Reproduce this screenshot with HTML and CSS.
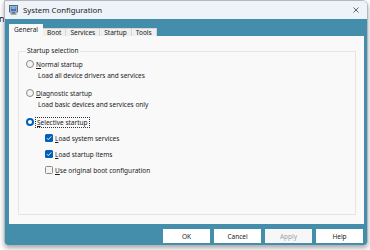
FILE: index.html
```html
<!DOCTYPE html>
<html>
<head>
<meta charset="utf-8">
<title>System Configuration</title>
<link rel="stylesheet" href="styles.css">
</head>
<body>
<div class="desktop">
  <span class="behind">n</span>
  <div class="window">
    <div class="titlebar">
      <svg class="appicon" width="10" height="10" viewBox="0 0 10 10">
        <rect x="0.5" y="0.5" width="8" height="6.5" fill="#dfe6ee" stroke="#5b6670" stroke-width="1"/>
        <rect x="1.5" y="1.5" width="6" height="4.5" fill="#3b78c4"/>
        <rect x="2.5" y="2.5" width="4" height="1" fill="#cfe3f7"/>
        <rect x="3" y="7.2" width="3" height="1.2" fill="#5b6670"/>
        <rect x="1.5" y="8.4" width="6" height="1.1" fill="#5b6670"/>
      </svg>
      <span class="title">System Configuration</span>
      <svg class="close" width="6" height="6" viewBox="0 0 6 6">
        <path d="M0.5 0.5 L5.5 5.5 M5.5 0.5 L0.5 5.5" stroke="#555" stroke-width="0.9" fill="none"/>
      </svg>
    </div>
    <div class="frame">
      <div class="tabs">
        <div class="tab active">General</div>
        <div class="tab">Boot</div>
        <div class="tab">Services</div>
        <div class="tab">Startup</div>
        <div class="tab">Tools</div>
      </div>
      <div class="panel">
        <fieldset class="group">
          <legend>Startup selection</legend>
          <div class="opt first"><span class="radio"></span><span><u>N</u>ormal startup</span></div>
          <div class="desc">Load all device drivers and services</div>
          <div class="opt"><span class="radio"></span><span><u>D</u>iagnostic startup</span></div>
          <div class="desc">Load basic devices and services only</div>
          <div class="opt"><span class="radio on"></span><span class="focus"><u>S</u>elective startup</span></div>
          <div class="sub">
            <div class="chk-row"><span class="check on"><svg width="8" height="8" viewBox="0 0 8 8"><path d="M1.8 4.1 L3.3 5.6 L6.3 2.4" stroke="#fff" stroke-width="0.9" fill="none"/></svg></span><span><u>L</u>oad system services</span></div>
            <div class="chk-row"><span class="check on"><svg width="8" height="8" viewBox="0 0 8 8"><path d="M1.8 4.1 L3.3 5.6 L6.3 2.4" stroke="#fff" stroke-width="0.9" fill="none"/></svg></span><span><u>L</u>oad startup items</span></div>
            <div class="chk-row"><span class="check"></span><span><u>U</u>se original boot configuration</span></div>
          </div>
        </fieldset>
      </div>
      <div class="buttons">
        <button class="btn">OK</button>
        <button class="btn">Cancel</button>
        <button class="btn disabled">Apply</button>
        <button class="btn">Help</button>
      </div>
    </div>
  </div>
</div>
</body>
</html>
```
FILE: styles.css
```css
* { box-sizing: border-box; }
html, body { margin: 0; padding: 0; }
body {
  width: 370px;
  height: 250px;
  overflow: hidden;
  background: #ffffff;
  font-family: "Noto Sans", "Open Sans", sans-serif;
  font-size: 6.5px;
  color: #1b1b1b;
}
.desktop { position: relative; width: 370px; height: 250px; }
.behind {
  position: absolute;
  left: -1px;
  top: 14px;
  font-size: 9px;
  line-height: 10px;
  color: #222;
}
.window {
  position: absolute;
  left: 4px;
  top: 0;
  width: 364px;
  height: 246px;
  border: 1px solid #b4b8bd;
  border-radius: 0 6px 4px 4px;
  overflow: hidden;
  box-shadow: 0 2px 5px rgba(0,0,0,0.35);
  display: flex;
  flex-direction: column;
}
.titlebar {
  height: 18px;
  background: #eef2f9;
  display: flex;
  align-items: center;
  padding: 0 0 0 4px;
  flex: none;
}
.appicon { margin-right: 4px; margin-top: -1px; }
.title { font-size: 7.8px; color: #1b1b1b; flex: 1; }
.close { margin-right: 8px; }
.frame {
  flex: 1;
  background: #448dab;
  padding: 5px 3px 0 4px;
  display: flex;
  flex-direction: column;
}
.tabs {
  display: flex;
  align-items: flex-end;
  height: 12px;
  position: relative;
  z-index: 1;
}
.tab {
  height: 8px;
  line-height: 7px;
  padding: 0 4px;
  background: #f0f0f0;
  border: 1px solid #d6d6d6;
  border-bottom: none;
  border-left: none;
  font-size: 6.5px;
}
.tab.active {
  height: 13px;
  margin-bottom: -1px;
  line-height: 11px;
  background: #f9f9f9;
  border: none;
  padding: 0 5px;
}
.panel {
  height: 188px;
  background: #f9f9f9;
  padding: 11px 8px 9px 9px;
  display: flex;
}
.group {
  flex: 1;
  margin: 0;
  border: 1px solid #e5e5e5;
  padding: 5px 6px 0 7px;
  min-width: 0;
}
.group legend {
  padding: 0 1px;
  margin-left: 0;
  font-size: 6.5px;
  line-height: 8px;
}
.opt {
  display: flex;
  align-items: center;
  height: 10px;
  margin-top: 7px;
}
.opt.first { margin-top: -1px; }
.radio {
  width: 8px;
  height: 8px;
  border-radius: 50%;
  border: 1px solid #8a8a8a;
  background: #f4f4f4;
  margin-right: 2px;
  flex: none;
}
.radio.on {
  border: 2.5px solid #005fb8;
  background: #ffffff;
}
.focus { outline: 1px dotted #333; outline-offset: 0; padding: 0 1px; }
.desc {
  padding-left: 12px;
  height: 10px;
  line-height: 10px;
  margin-top: 2px;
}
.sub { padding-left: 19px; padding-top: 6px; }
.chk-row {
  display: flex;
  align-items: center;
  height: 10px;
  margin-bottom: 6px;
}
.check {
  width: 8px;
  height: 8px;
  border-radius: 1.5px;
  border: 1px solid #8a8a8a;
  background: #f4f4f4;
  margin-right: 2px;
  flex: none;
  display: flex;
}
.check.on { border: none; background: #005fb8; }
.buttons {
  display: flex;
  justify-content: flex-end;
  gap: 4px;
  padding: 5px 0 0 0;
  margin-right: 1px;
}
.btn {
  width: 47px;
  height: 14px;
  padding: 0;
  border: none;
  background: #ffffff;
  font-family: inherit;
  font-size: 6.5px;
  color: #1b1b1b;
}
.btn.disabled { color: #a0a0a0; background: #f7f7f7; }
```
